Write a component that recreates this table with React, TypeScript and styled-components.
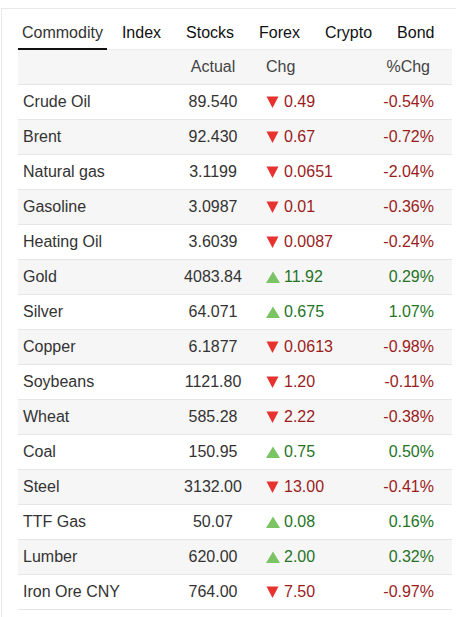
import React from "react";
import styled, { createGlobalStyle } from "styled-components";

const Global = createGlobalStyle`
  html, body { margin: 0; padding: 0; overflow: hidden; background: #fff; }
  body { font-family: "Liberation Sans", Arial, sans-serif; font-size: 16px; color: #333; }
`;

const Card = styled.div`
  margin: 8px 0 0 1px;
  width: 468px;
  border: 1px solid #e8e8e8;
  padding: 0 16px 20px;
  box-sizing: border-box;
  background: #fff;
`;

const TabBar = styled.div`
  display: flex;
  gap: 25px;
  border-bottom: 1px solid #ececec;
`;

const Tab = styled.div<{ $active?: boolean }>`
  padding: 14px ${(p) => (p.$active ? "4px" : "0")} 5px;
  margin-right: ${(p) => (p.$active ? "-10px" : "0")};
  line-height: 20px;
  border-bottom: 2px solid ${(p) => (p.$active ? "#111" : "transparent")};
  margin-bottom: -1px;
  color: ${(p) => (p.$active ? "#333" : "#111")};
  white-space: nowrap;
`;

const Row = styled.div<{ $shade?: boolean }>`
  display: grid;
  grid-template-columns: 155px 80px 110px 89px;
  height: 35px;
  box-sizing: border-box;
  border-bottom: 1px solid #e6e6e6;
  background: ${(p) => (p.$shade ? "#f6f6f6" : "#fff")};
  align-items: center;
  line-height: 20px;
`;

const Name = styled.div`
  padding-left: 5px;
  color: #333;
  white-space: nowrap;
`;

const Actual = styled.div<{ $head?: boolean }>`
  text-align: center;
  color: ${(p) => (p.$head ? "#444" : "#333")};
`;

const Chg = styled.div<{ $dir?: "up" | "down"; $head?: boolean }>`
  padding-left: 13px;
  display: flex;
  align-items: center;
  color: ${(p) => (p.$head ? "#444" : p.$dir === "up" ? "#267326" : "#9b1c1c")};
`;

const Pct = styled.div<{ $dir?: "up" | "down"; $head?: boolean }>`
  text-align: right;
  padding-right: ${(p) => (p.$head ? "22px" : "18px")};
  color: ${(p) => (p.$head ? "#444" : p.$dir === "up" ? "#267326" : "#9b1c1c")};
`;

const Arrow = styled.svg`
  flex: none;
  margin-right: 3px;
  display: block;
`;

const Tri = ({ dir }: { dir: "up" | "down" }) =>
  dir === "down" ? (
    <Arrow width="15" height="12" viewBox="0 0 15 12">
      <polygon points="0.5,0.5 12.5,0.5 6.5,12" fill="#e8322f" />
    </Arrow>
  ) : (
    <Arrow width="15" height="12" viewBox="0 0 15 12">
      <polygon points="0,12 14,12 7,0.5" fill="#7bc463" />
    </Arrow>
  );

type Item = { name: string; actual: string; chg: string; pct: string; dir: "up" | "down" };

const data: Item[] = [
  { name: "Crude Oil", actual: "89.540", chg: "0.49", pct: "-0.54%", dir: "down" },
  { name: "Brent", actual: "92.430", chg: "0.67", pct: "-0.72%", dir: "down" },
  { name: "Natural gas", actual: "3.1199", chg: "0.0651", pct: "-2.04%", dir: "down" },
  { name: "Gasoline", actual: "3.0987", chg: "0.01", pct: "-0.36%", dir: "down" },
  { name: "Heating Oil", actual: "3.6039", chg: "0.0087", pct: "-0.24%", dir: "down" },
  { name: "Gold", actual: "4083.84", chg: "11.92", pct: "0.29%", dir: "up" },
  { name: "Silver", actual: "64.071", chg: "0.675", pct: "1.07%", dir: "up" },
  { name: "Copper", actual: "6.1877", chg: "0.0613", pct: "-0.98%", dir: "down" },
  { name: "Soybeans", actual: "1121.80", chg: "1.20", pct: "-0.11%", dir: "down" },
  { name: "Wheat", actual: "585.28", chg: "2.22", pct: "-0.38%", dir: "down" },
  { name: "Coal", actual: "150.95", chg: "0.75", pct: "0.50%", dir: "up" },
  { name: "Steel", actual: "3132.00", chg: "13.00", pct: "-0.41%", dir: "down" },
  { name: "TTF Gas", actual: "50.07", chg: "0.08", pct: "0.16%", dir: "up" },
  { name: "Lumber", actual: "620.00", chg: "2.00", pct: "0.32%", dir: "up" },
  { name: "Iron Ore CNY", actual: "764.00", chg: "7.50", pct: "-0.97%", dir: "down" },
];

const tabs = ["Commodity", "Index", "Stocks", "Forex", "Crypto", "Bond"];

export default function App() {
  return (
    <>
      <Global />
      <Card>
        <TabBar>
          {tabs.map((t, i) => (
            <Tab key={t} $active={i === 0}>
              {t}
            </Tab>
          ))}
        </TabBar>
        <Row $shade>
          <Name />
          <Actual $head>Actual</Actual>
          <Chg $head>Chg</Chg>
          <Pct $head>%Chg</Pct>
        </Row>
        {data.map((d, i) => (
          <Row key={d.name} $shade={i % 2 === 1}>
            <Name>{d.name}</Name>
            <Actual>{d.actual}</Actual>
            <Chg $dir={d.dir}>
              <Tri dir={d.dir} />
              {d.chg}
            </Chg>
            <Pct $dir={d.dir}>{d.pct}</Pct>
          </Row>
        ))}
      </Card>
    </>
  );
}
